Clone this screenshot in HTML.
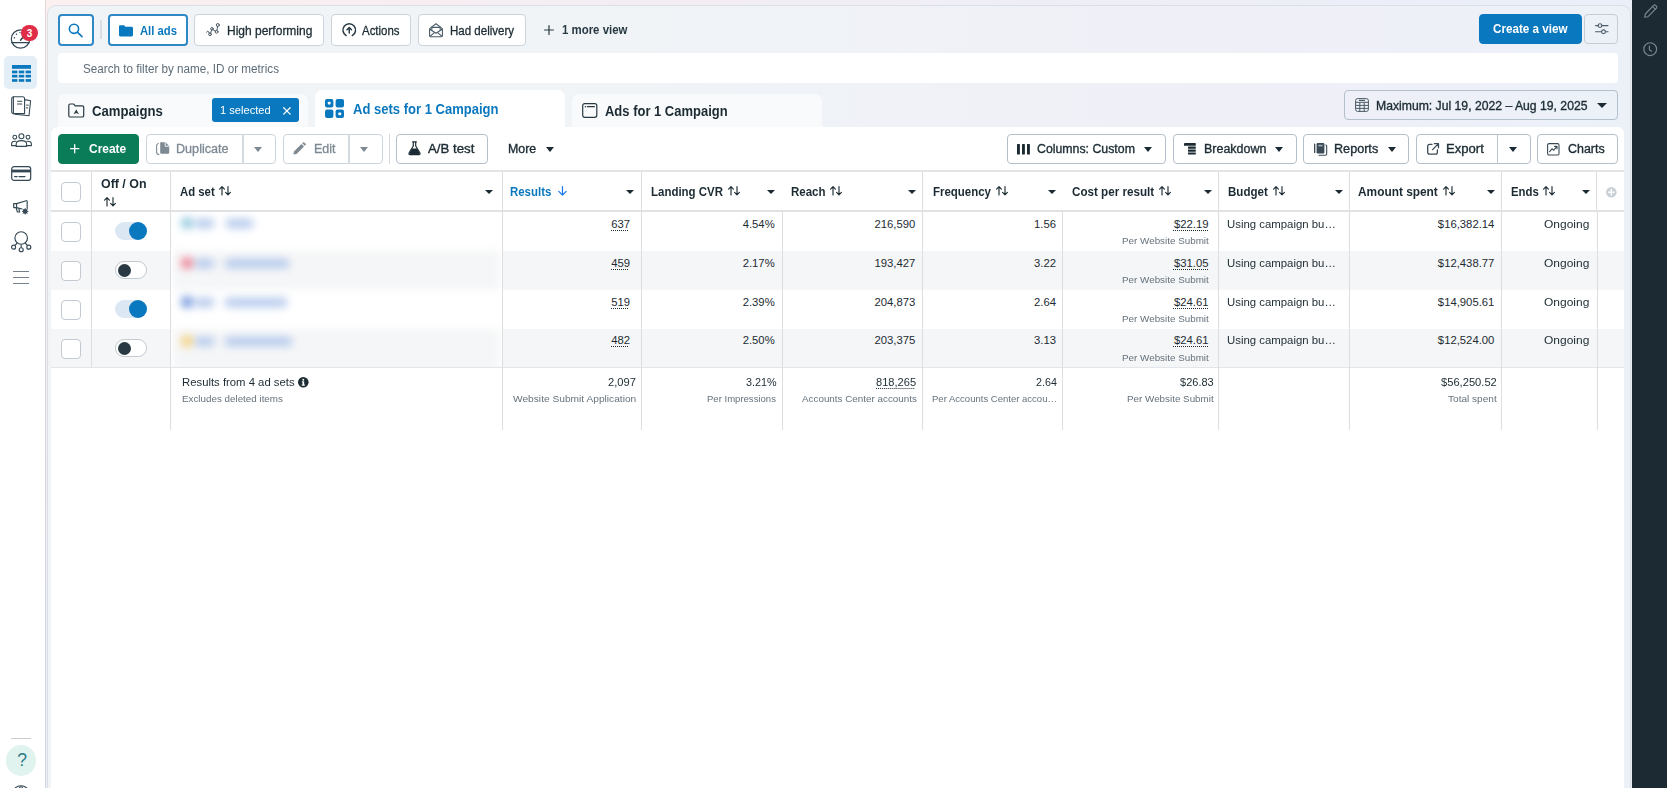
<!DOCTYPE html>
<html lang="en">
<head>
<meta charset="utf-8">
<title>Ads Manager</title>
<style>
*{box-sizing:border-box;margin:0;padding:0}
html,body{width:1667px;height:788px;overflow:hidden}
body{position:relative;font-family:"Liberation Sans",sans-serif;color:#1c2b33;font-size:12px;
 background:linear-gradient(to bottom right,#fcf1ef 0%,#f6eef2 14%,#f0eef6 28%,#e9eff8 50%,#e6f0fa 100%)}
.abs{position:absolute}
#left{position:absolute;left:0;top:0;width:45px;height:788px;background:#fff}
#leftb{position:absolute;left:45px;top:0;width:1px;height:788px;background:rgba(60,40,60,.13)}
#right{position:absolute;left:1632px;top:0;width:35px;height:788px;background:#1c2b33}
#panel{position:absolute;left:47px;top:5px;width:1584px;height:800px;border:1px solid #dcdfe4;border-radius:9px 9px 0 0;
 background:linear-gradient(90deg,#f0f4f7 0%,#f0f4f7 35%,#efeff7 78%,#ecf1f8 100%)}
#white{position:absolute;left:51px;top:127px;width:1573px;height:700px;background:#fff;border-radius:7px 7px 0 0}
.btn{position:absolute;border:1px solid #ccd3da;border-radius:4px;background:#fff}
.t{position:absolute;white-space:nowrap;line-height:1}
svg{position:absolute;overflow:visible}
.vl{position:absolute;width:1px;background:#dcdee1}
.hl{position:absolute;height:1px;background:#dcdee1}
.cb{position:absolute;width:20px;height:20px;border:1px solid #c3cad2;border-radius:4px;background:#fff}
.tg{position:absolute;width:32px;height:18px;border-radius:9px}
.tg i{position:absolute;top:0;width:18px;height:18px;border-radius:9px}
.tg.on{background:#dbe8f3}
.tg.on i{right:0;background:#0a78be}
.tg.off{background:#fff;border:1px solid #c3cad2}
.tg.off i{left:2px;top:1.5px;width:13px;height:13px;background:#283943}
.car{position:absolute;width:0;height:0;border-left:4px solid transparent;border-right:4px solid transparent;border-top:5px solid #1c2b33}
</style>
</head>
<body>
<div id="left"></div><div id="leftb"></div><div id="panel"></div><div id="white"></div><div id="right"></div>
<div class="btn" style="left:58px;top:14px;width:36px;height:32px;border:2px solid #2f89c7"></div>
<svg style="left:68px;top:23px" width="15" height="15" viewBox="0 0 15 15" fill="none" stroke="#0a78be" stroke-width="1.6" stroke-linecap="round"><circle cx="6" cy="5.8" r="4.6"/><path d="M9.6 9.4 L14 13.6"/></svg>
<div class="abs" style="left:100px;top:20px;width:2px;height:19px;background:#dadee6"></div>
<div class="btn" style="left:108px;top:14px;width:80px;height:32px;border:2px solid #2f89c7"></div>
<svg style="left:119px;top:24.5px" width="14" height="11.5" viewBox="0 0 14 11.5"><path d="M0 1.6 Q0 0.3 1.3 0.3 H4.6 Q5.4 0.3 5.8 0.9 L6.4 1.8 H12.6 Q14 1.8 14 3.2 V10 Q14 11.4 12.6 11.4 H1.4 Q0 11.4 0 10 Z" fill="#0a78be"/></svg>
<div class="btn" style="left:194px;top:14px;width:130px;height:32px;"></div>
<svg style="left:206px;top:23px" width="14" height="13" viewBox="0 0 14 13" fill="none" stroke="#4a5a66" stroke-width="1" stroke-linecap="round" stroke-linejoin="round"><path d="M0.6 9.2 Q1.6 7.2 2.6 8.6 L3.3 10.2 M4.6 10.3 L5.6 6.9 M6.7 6.6 L9.6 8.3 M10.9 7.6 L11.6 3.3"/><circle cx="11.8" cy="2" r="1.5"/><circle cx="4" cy="11.3" r="1.4"/><circle cx="6" cy="5.8" r="1.3"/><circle cx="10.6" cy="8.8" r="1.4"/></svg>
<div class="btn" style="left:331px;top:14px;width:80px;height:32px;"></div>
<svg style="left:341.5px;top:22.5px" width="14.5" height="14" viewBox="0 0 14.5 14" fill="none" stroke="#283943" stroke-width="1.45" stroke-linecap="round" stroke-linejoin="round"><path d="M4.2 12.6 A6.3 6.3 0 1 1 10.3 12.6"/><path d="M7.25 10 V4.6 M5 6.7 L7.25 4.4 L9.5 6.7"/></svg>
<div class="btn" style="left:418px;top:14px;width:108px;height:32px;"></div>
<svg style="left:429px;top:22.5px" width="14" height="14.5" viewBox="0 0 14 14.5" fill="none" stroke="#4a5a66" stroke-width="1.1" stroke-linejoin="round"><path d="M0.6 5.6 L7 0.8 L13.4 5.6 V12.4 Q13.4 13.8 12 13.8 H2 Q0.6 13.8 0.6 12.4 Z"/><path d="M2.8 7.2 V4.4 H11.2 V7.2"/><path d="M0.9 6.2 L7 10.2 L13.1 6.2"/><path d="M1 13.3 L5.6 9.4 M13 13.3 L8.4 9.4"/></svg>
<svg style="left:544px;top:24.8px" width="10" height="10" viewBox="0 0 10 10" stroke="#283943" stroke-width="1.2" stroke-linecap="round"><path d="M5 0.6 V9.4 M0.6 5 H9.4"/></svg>
<div class="btn" style="left:1479px;top:14px;width:102.5px;height:30px;background:#0a78be;border-color:#0a78be"></div>
<div class="btn" style="left:1584px;top:14px;width:34px;height:30px;background:transparent;border-color:#c5ccd4"></div>
<svg style="left:1594.5px;top:23px" width="13.5" height="11.5" viewBox="0 0 13.5 11.5" fill="none" stroke="#4a5a66" stroke-width="1.1" stroke-linecap="round"><path d="M0.6 2.6 H3 M7 2.6 H13 M0.6 8.8 H6.4 M10.6 8.8 H13"/><circle cx="5" cy="2.6" r="1.9"/><circle cx="8.5" cy="8.8" r="1.9"/></svg>
<div class="abs" style="left:58px;top:53px;width:1560px;height:30px;background:#fff;border-radius:4px"></div>
<div class="abs" style="left:58px;top:93.5px;width:250px;height:34px;background:#f8fafb;border-radius:7px 7px 0 0"></div>
<div class="abs" style="left:315px;top:89.5px;width:250px;height:40px;background:#fff;border-radius:7px 7px 0 0"></div>
<div class="abs" style="left:572px;top:93.5px;width:250px;height:34px;background:#f8fafb;border-radius:7px 7px 0 0"></div>
<div class="abs" style="left:51px;top:127px;width:1573px;height:10px;background:#fff;border-radius:7px 7px 0 0"></div>
<svg style="left:68px;top:103px" width="16.5" height="15" viewBox="0 0 16.5 15" fill="none" stroke="#283943" stroke-width="1.2" stroke-linejoin="round"><path d="M0.8 2.4 Q0.8 1 2.2 1 H5.2 Q6 1 6.4 1.7 L7 2.8 H14.2 Q15.7 2.8 15.7 4.2 V12.4 Q15.7 14 14.2 14 H2.3 Q0.8 14 0.8 12.4 Z"/><path d="M5.5 11.2 L8.25 6.4 L11 11.2 L8.25 9.9 Z" fill="#283943" stroke="none"/></svg>
<div class="abs" style="left:212px;top:98px;width:86.5px;height:24px;background:#0a78be;border-radius:3px"></div>
<svg style="left:283px;top:106.6px" width="7.8" height="7.8" viewBox="0 0 8 8" stroke="#fff" stroke-width="1.3" stroke-linecap="round"><path d="M0.7 0.7 L7.3 7.3 M7.3 0.7 L0.7 7.3"/></svg>
<svg style="left:325px;top:99px" width="19" height="19" viewBox="0 0 19 19"><g fill="#0a78be"><rect x="0" y="0" width="8.4" height="8.4" rx="2"/><rect x="10.6" y="0" width="8.4" height="8.4" rx="2"/><rect x="0" y="10.6" width="8.4" height="8.4" rx="2"/><rect x="10.6" y="10.6" width="8.4" height="8.4" rx="2"/></g><g fill="#fff"><rect x="2.8" y="2.8" width="2.8" height="2.8" rx="0.8"/><rect x="13.4" y="13.4" width="2.8" height="2.8" rx="0.8"/></g></svg>
<svg style="left:582px;top:103px" width="15.5" height="15" viewBox="0 0 15.5 15" fill="none" stroke="#283943" stroke-width="1.2"><rect x="0.7" y="0.7" width="14.1" height="13.6" rx="2"/><path d="M5.4 3.7 H12.4" stroke-linecap="round"/><circle cx="3.4" cy="3.7" r="0.8" fill="#283943" stroke="none"/></svg>
<div class="btn" style="left:1344px;top:89.5px;width:274px;height:30.5px;background:transparent;border-color:#b3bfcb"></div>
<svg style="left:1355px;top:98px" width="14" height="14" viewBox="0 0 14 14" fill="none" stroke="#4a5a66" stroke-width="1"><rect x="0.6" y="0.6" width="12.8" height="12.8" rx="2"/><path d="M0.6 4.3 H13.4 M0.6 7.4 H13.4 M0.6 10.4 H13.4 M4.8 4.3 V13.4 M9.2 4.3 V13.4"/><path d="M4 2.4 H10" stroke-width="1.2"/></svg>
<div class="car" style="left:1596.5px;top:102.7px;border-left-width:5px;border-right-width:5px;border-top-width:5.5px"></div>
<div class="btn" style="left:58px;top:134px;width:81px;height:30px;background:#0b7c58;border-color:#0b7c58"></div>
<svg style="left:70px;top:144.4px" width="9.4" height="9.4" viewBox="0 0 9.4 9.4" stroke="#fff" stroke-width="1.3" stroke-linecap="round"><path d="M4.7 0.6 V8.8 M0.6 4.7 H8.8"/></svg>
<div class="btn" style="left:146px;top:134px;width:130px;height:30px;border-color:#ccd4dc"></div>
<div class="vl" style="left:241.5px;top:134px;height:30px;width:2px;background:#d3dae2"></div>
<svg style="left:156px;top:142px" width="13.5" height="13" viewBox="0 0 13.5 13"><path d="M4.2 0.3 H9.4 L13.2 4 V10.6 Q13.2 11.8 12 11.8 H5.4 Q4.2 11.8 4.2 10.6 Z" fill="#7d8993"/><path d="M9.2 0.5 V4.2 H13" stroke="#fff" stroke-width="0.9" fill="none"/><path d="M2.2 1.4 Q0.6 2.2 0.6 4 V9.8 Q0.6 12.2 2.8 12.6" fill="none" stroke="#7d8993" stroke-width="1.1" stroke-linecap="round"/></svg>
<div class="car" style="left:254px;top:147.2px;border-left-width:4.6px;border-right-width:4.6px;border-top-width:5.3px;border-top-color:#7d8993"></div>
<div class="btn" style="left:283px;top:134px;width:100px;height:30px;border-color:#ccd4dc"></div>
<div class="vl" style="left:348px;top:134px;height:30px;width:2px;background:#d3dae2"></div>
<svg style="left:293px;top:142px" width="13" height="13" viewBox="0 0 13 13" fill="#7d8993"><path d="M0.4 12.6 L1 9.4 L8.4 2 L11 4.6 L3.6 12 Z"/><path d="M9.2 1.2 L10 0.4 Q10.6 -0.1 11.2 0.4 L12.6 1.8 Q13.1 2.4 12.6 3 L11.8 3.8 Z"/></svg>
<div class="car" style="left:360.3px;top:147.2px;border-left-width:4.6px;border-right-width:4.6px;border-top-width:5.3px;border-top-color:#7d8993"></div>
<div class="vl" style="left:389px;top:134px;height:30px;background:#d3d9de"></div>
<div class="btn" style="left:396px;top:134px;width:92px;height:30px;border-color:#b3bfcb"></div>
<svg style="left:407.5px;top:141.2px" width="13" height="14.4" viewBox="0 0 13 14.4"><path d="M4.6 0.8 H8.4 M5.3 0.8 V5 L1.2 11.8 Q0.4 13.6 2.2 13.7 H10.8 Q12.6 13.6 11.8 11.8 L7.7 5 V0.8" fill="none" stroke="#1c2b33" stroke-width="1.2" stroke-linecap="round" stroke-linejoin="round"/><path d="M3.9 7.6 H9.1 L11.4 11.7 Q11.9 13 10.7 13.1 H2.3 Q1.1 13 1.6 11.7 Z" fill="#1c2b33"/></svg>
<div class="car" style="left:545.6px;top:147.2px;border-left-width:4.6px;border-right-width:4.6px;border-top-width:5.3px"></div>
<div class="btn" style="left:1007px;top:134px;width:159px;height:30px;border-color:#b3bfcb"></div>
<svg style="left:1017px;top:143.6px" width="13" height="10.6" viewBox="0 0 13 10.6" fill="#1c2b33"><rect x="0" y="0" width="2.9" height="10.6" rx="0.6"/><rect x="5" y="0" width="2.9" height="10.6" rx="0.6"/><rect x="10" y="0" width="2.9" height="10.6" rx="0.6"/></svg>
<div class="car" style="left:1144.4px;top:147.2px;border-left-width:4.6px;border-right-width:4.6px;border-top-width:5.3px"></div>
<div class="btn" style="left:1173px;top:134px;width:124px;height:30px;border-color:#b3bfcb"></div>
<svg style="left:1183.5px;top:143px" width="11.8" height="11.6" viewBox="0 0 11.8 11.6" fill="#1c2b33"><rect x="0" y="0" width="11.8" height="2.7" rx="0.5"/><rect x="4" y="3.6" width="7.8" height="2.2" rx="0.4"/><rect x="4" y="6.5" width="7.8" height="2.2" rx="0.4"/><rect x="4" y="9.4" width="7.8" height="2.2" rx="0.4"/></svg>
<div class="car" style="left:1274.9px;top:147.2px;border-left-width:4.6px;border-right-width:4.6px;border-top-width:5.3px"></div>
<div class="btn" style="left:1303px;top:134px;width:106px;height:30px;border-color:#b3bfcb"></div>
<svg style="left:1313.5px;top:142.8px" width="13.2" height="12.6" viewBox="0 0 13.2 12.6"><rect x="0" y="0.4" width="1.3" height="9.6" rx="0.5" fill="#3a4b57"/><rect x="2.6" y="0" width="7.8" height="10.4" rx="1.2" fill="#3a4b57"/><rect x="4.4" y="1.8" width="4.2" height="1.6" fill="#fff" opacity=".55"/><path d="M11.8 2 Q12.7 2 12.7 3 V10.8 Q12.7 12.2 11.3 12.2 H5" fill="none" stroke="#3a4b57" stroke-width="1.1" stroke-linecap="round"/></svg>
<div class="car" style="left:1387.6px;top:147.2px;border-left-width:4.6px;border-right-width:4.6px;border-top-width:5.3px"></div>
<div class="btn" style="left:1416px;top:134px;width:115px;height:30px;border-color:#b3bfcb"></div>
<div class="vl" style="left:1497px;top:134px;height:30px;background:#bcc5cd"></div>
<svg style="left:1427px;top:142.8px" width="12.2" height="11.8" viewBox="0 0 12.2 11.8" fill="none" stroke="#3a4b57" stroke-width="1.3" stroke-linecap="round" stroke-linejoin="round"><path d="M5 1.4 H2.6 Q0.7 1.4 0.7 3.3 V9.2 Q0.7 11.1 2.6 11.1 H8.5 Q10.4 11.1 10.4 9.2 V7"/><path d="M7.4 0.7 H11.5 V4.8 M11.3 0.9 L5.6 6.6"/></svg>
<div class="car" style="left:1509px;top:147.2px;border-left-width:4.6px;border-right-width:4.6px;border-top-width:5.3px"></div>
<div class="btn" style="left:1537px;top:134px;width:81px;height:30px;border-color:#b3bfcb"></div>
<svg style="left:1547.2px;top:142.8px" width="12.6" height="12.6" viewBox="0 0 12.6 12.6" fill="none" stroke="#3a4b57" stroke-width="1.1" stroke-linecap="round" stroke-linejoin="round"><rect x="0.6" y="0.6" width="11.4" height="11.4" rx="1.4"/><path d="M2.6 8.6 L5 5.8 L6.8 7.2 L9.8 3.6 M7.6 3.4 H10 V5.8"/></svg>
<div class="hl" style="left:51px;top:170px;height:2px;width:1573px;background:#e3e4e6"></div>
<div class="hl" style="left:51px;top:210px;height:2px;width:1573px;background:#e1e2e4"></div>
<div class="abs" style="left:51px;top:251px;width:1573px;height:39px;background:#f5f6f7"></div>
<div class="abs" style="left:51px;top:329px;width:1573px;height:39px;background:#f5f6f7"></div>
<div class="hl" style="left:51px;top:367px;width:1573px;background:#e3e6e9"></div>
<div class="abs" style="left:171px;top:212px;width:331px;height:155px;overflow:hidden;background:#fff"><div class="abs" style="left:0;top:0;width:331px;height:155px;filter:blur(4.2px)"><div class="abs" style="left:2px;top:39px;width:327px;height:39px;background:#f5f6f7"></div><div class="abs" style="left:2px;top:117px;width:327px;height:45px;background:#f5f6f7"></div><div class="abs" style="left:10px;top:5.4px;width:12px;height:12px;border-radius:6px;background:#8fc8dd"></div><div class="abs" style="left:24px;top:6.9px;width:19px;height:9px;border-radius:3px;background:#b4c9ec"></div><div class="abs" style="left:54.7px;top:6.9px;width:27.299999999999997px;height:9px;border-radius:3px;background:#b4c9ec"></div><div class="abs" style="left:10px;top:45.2px;width:12px;height:12px;border-radius:6px;background:#ee7f92"></div><div class="abs" style="left:24px;top:46.7px;width:19px;height:9px;border-radius:3px;background:#b4c9ec"></div><div class="abs" style="left:53.7px;top:46.7px;width:63.89999999999999px;height:9px;border-radius:3px;background:#b4c9ec"></div><div class="abs" style="left:10px;top:84px;width:12px;height:12px;border-radius:6px;background:#7396de"></div><div class="abs" style="left:24px;top:85.5px;width:19px;height:9px;border-radius:3px;background:#b4c9ec"></div><div class="abs" style="left:54px;top:85.5px;width:62px;height:9px;border-radius:3px;background:#b4c9ec"></div><div class="abs" style="left:10px;top:123px;width:12px;height:12px;border-radius:6px;background:#f4d27c"></div><div class="abs" style="left:24px;top:124.5px;width:19px;height:9px;border-radius:3px;background:#b4c9ec"></div><div class="abs" style="left:53.8px;top:124.5px;width:67.4px;height:9px;border-radius:3px;background:#b4c9ec"></div></div></div>
<div class="vl" style="left:91px;top:172px;height:39px"></div>
<div class="vl" style="left:170px;top:172px;height:39px"></div>
<div class="vl" style="left:502px;top:172px;height:39px"></div>
<div class="vl" style="left:641px;top:172px;height:39px"></div>
<div class="vl" style="left:922px;top:172px;height:39px"></div>
<div class="vl" style="left:1218px;top:172px;height:39px"></div>
<div class="vl" style="left:1349px;top:172px;height:39px"></div>
<div class="vl" style="left:1501px;top:172px;height:39px"></div>
<div class="vl" style="left:1596px;top:172px;height:39px"></div>
<div class="vl" style="left:91px;top:212px;height:155px"></div>
<div class="vl" style="left:170px;top:212px;height:218px"></div>
<div class="vl" style="left:502px;top:212px;height:218px"></div>
<div class="vl" style="left:641px;top:212px;height:218px"></div>
<div class="vl" style="left:782px;top:212px;height:218px"></div>
<div class="vl" style="left:922px;top:212px;height:218px"></div>
<div class="vl" style="left:1062px;top:212px;height:218px"></div>
<div class="vl" style="left:1218px;top:212px;height:218px"></div>
<div class="vl" style="left:1349px;top:212px;height:218px"></div>
<div class="vl" style="left:1501px;top:212px;height:218px"></div>
<div class="vl" style="left:1597px;top:212px;height:218px"></div>
<div class="cb" style="left:61px;top:182px"></div>
<div class="cb" style="left:61px;top:221.5px"></div>
<div class="tg on" style="left:115px;top:222px"><i></i></div>
<div class="cb" style="left:61px;top:260.5px"></div>
<div class="tg off" style="left:115px;top:261px"><i></i></div>
<div class="cb" style="left:61px;top:299.5px"></div>
<div class="tg on" style="left:115px;top:300px"><i></i></div>
<div class="cb" style="left:61px;top:338.5px"></div>
<div class="tg off" style="left:115px;top:339px"><i></i></div>
<svg style="left:104.3px;top:196.6px" width="12" height="9.4" viewBox="0 0 12 9.4" fill="none" stroke="#1c2b33" stroke-width="1.15" stroke-linecap="round" stroke-linejoin="round"><path d="M3 9 V0.8 M0.6 3.2 L3 0.7 L5.4 3.2 M9 0.6 V8.8 M6.6 6.4 L9 8.9 L11.4 6.4"/></svg>
<svg style="left:219.4px;top:186.4px" width="12" height="9.4" viewBox="0 0 12 9.4" fill="none" stroke="#1c2b33" stroke-width="1.15" stroke-linecap="round" stroke-linejoin="round"><path d="M3 9 V0.8 M0.6 3.2 L3 0.7 L5.4 3.2 M9 0.6 V8.8 M6.6 6.4 L9 8.9 L11.4 6.4"/></svg>
<div class="car" style="left:485.3px;top:190.2px;border-left-width:4px;border-right-width:4px;border-top-width:4.7px"></div>
<svg style="left:557.8px;top:186px" width="9" height="9.8" viewBox="0 0 9 9.8" fill="none" stroke="#1877f2" stroke-width="1.25" stroke-linecap="round" stroke-linejoin="round"><path d="M4.5 0.7 V9 M0.8 5.4 L4.5 9.1 L8.2 5.4"/></svg>
<div class="car" style="left:626.4px;top:190.2px;border-left-width:4px;border-right-width:4px;border-top-width:4.7px"></div>
<svg style="left:727.6px;top:186.4px" width="12" height="9.4" viewBox="0 0 12 9.4" fill="none" stroke="#1c2b33" stroke-width="1.15" stroke-linecap="round" stroke-linejoin="round"><path d="M3 9 V0.8 M0.6 3.2 L3 0.7 L5.4 3.2 M9 0.6 V8.8 M6.6 6.4 L9 8.9 L11.4 6.4"/></svg>
<div class="car" style="left:767.2px;top:190.2px;border-left-width:4px;border-right-width:4px;border-top-width:4.7px"></div>
<svg style="left:830px;top:186.4px" width="12" height="9.4" viewBox="0 0 12 9.4" fill="none" stroke="#1c2b33" stroke-width="1.15" stroke-linecap="round" stroke-linejoin="round"><path d="M3 9 V0.8 M0.6 3.2 L3 0.7 L5.4 3.2 M9 0.6 V8.8 M6.6 6.4 L9 8.9 L11.4 6.4"/></svg>
<div class="car" style="left:907.5px;top:190.2px;border-left-width:4px;border-right-width:4px;border-top-width:4.7px"></div>
<svg style="left:995.6px;top:186.4px" width="12" height="9.4" viewBox="0 0 12 9.4" fill="none" stroke="#1c2b33" stroke-width="1.15" stroke-linecap="round" stroke-linejoin="round"><path d="M3 9 V0.8 M0.6 3.2 L3 0.7 L5.4 3.2 M9 0.6 V8.8 M6.6 6.4 L9 8.9 L11.4 6.4"/></svg>
<div class="car" style="left:1048.3999999999999px;top:190.2px;border-left-width:4px;border-right-width:4px;border-top-width:4.7px"></div>
<svg style="left:1159px;top:186.4px" width="12" height="9.4" viewBox="0 0 12 9.4" fill="none" stroke="#1c2b33" stroke-width="1.15" stroke-linecap="round" stroke-linejoin="round"><path d="M3 9 V0.8 M0.6 3.2 L3 0.7 L5.4 3.2 M9 0.6 V8.8 M6.6 6.4 L9 8.9 L11.4 6.4"/></svg>
<div class="car" style="left:1203.6px;top:190.2px;border-left-width:4px;border-right-width:4px;border-top-width:4.7px"></div>
<svg style="left:1272.8px;top:186.4px" width="12" height="9.4" viewBox="0 0 12 9.4" fill="none" stroke="#1c2b33" stroke-width="1.15" stroke-linecap="round" stroke-linejoin="round"><path d="M3 9 V0.8 M0.6 3.2 L3 0.7 L5.4 3.2 M9 0.6 V8.8 M6.6 6.4 L9 8.9 L11.4 6.4"/></svg>
<div class="car" style="left:1335.0px;top:190.2px;border-left-width:4px;border-right-width:4px;border-top-width:4.7px"></div>
<svg style="left:1442.6px;top:186.4px" width="12" height="9.4" viewBox="0 0 12 9.4" fill="none" stroke="#1c2b33" stroke-width="1.15" stroke-linecap="round" stroke-linejoin="round"><path d="M3 9 V0.8 M0.6 3.2 L3 0.7 L5.4 3.2 M9 0.6 V8.8 M6.6 6.4 L9 8.9 L11.4 6.4"/></svg>
<div class="car" style="left:1487.1999999999998px;top:190.2px;border-left-width:4px;border-right-width:4px;border-top-width:4.7px"></div>
<svg style="left:1543px;top:186.4px" width="12" height="9.4" viewBox="0 0 12 9.4" fill="none" stroke="#1c2b33" stroke-width="1.15" stroke-linecap="round" stroke-linejoin="round"><path d="M3 9 V0.8 M0.6 3.2 L3 0.7 L5.4 3.2 M9 0.6 V8.8 M6.6 6.4 L9 8.9 L11.4 6.4"/></svg>
<div class="car" style="left:1582.1999999999998px;top:190.2px;border-left-width:4px;border-right-width:4px;border-top-width:4.7px"></div>
<svg style="left:1606px;top:186.6px" width="10.6" height="10.6" viewBox="0 0 10.6 10.6"><circle cx="5.3" cy="5.3" r="5.3" fill="#c9d0d6"/><path d="M5.3 2.6 V8 M2.6 5.3 H8" stroke="#fff" stroke-width="1.5" stroke-linecap="round"/></svg>
<svg style="left:298.2px;top:376.7px" width="10.6" height="10.6" viewBox="0 0 10.6 10.6"><circle cx="5.3" cy="5.3" r="5.3" fill="#1c2b33"/><rect x="4.5" y="4.4" width="1.7" height="4" fill="#fff"/><rect x="3.8" y="4.4" width="1.6" height="1" fill="#fff"/><rect x="3.6" y="7.6" width="3.5" height="1" fill="#fff"/><circle cx="5.3" cy="2.7" r="1" fill="#fff"/></svg>
<svg style="left:10px;top:28px" width="22" height="22" viewBox="0 0 22 22" fill="none" stroke="#344854" stroke-width="1.2" stroke-linecap="round"><circle cx="10.5" cy="11" r="9.2"/><path d="M1.8 14.6 H19.2"/><path d="M10.5 12.2 L14.6 7.2" stroke-width="1.5"/><path d="M4.4 9.8 L4.5 9.8 M6.4 6.2 L6.5 6.2 M10 4.6 L10.1 4.6" stroke-width="1.4"/></svg>
<div class="abs" style="left:21.4px;top:25.3px;width:16.2px;height:16.2px;border-radius:9px;background:#e02c47"></div>
<div class="abs" style="left:4px;top:56px;width:33px;height:33px;border-radius:5px;background:#e3eef7"></div>
<svg style="left:11.7px;top:64.8px" width="19" height="17" viewBox="0 0 19 17" fill="#0a78be"><rect x="0" y="0" width="19" height="3.8"/><rect x="0" y="5.6" width="5.4" height="2.7"/><rect x="6.8" y="5.6" width="5.4" height="2.7"/><rect x="13.6" y="5.6" width="5.4" height="2.7"/><rect x="0" y="9.8" width="5.4" height="2.7"/><rect x="6.8" y="9.8" width="5.4" height="2.7"/><rect x="13.6" y="9.8" width="5.4" height="2.7"/><rect x="0" y="14.1" width="5.4" height="2.7"/><rect x="6.8" y="14.1" width="5.4" height="2.7"/><rect x="13.6" y="14.1" width="5.4" height="2.7"/></svg>
<svg style="left:11px;top:96px" width="20.5" height="21" viewBox="0 0 20.5 21" fill="none" stroke="#344854" stroke-width="1.1" stroke-linejoin="round" stroke-linecap="round"><path d="M13.6 3.6 L19.6 4.8 L18 19.8 L4 18.2"/><path d="M2.4 0.8 H11.6 Q13.6 0.8 13.6 2.8 V17.6 H2.4"/><path d="M2.4 0.8 Q0.7 0.9 0.7 2.6 V16 Q0.7 17.6 2.4 17.6 M2.4 0.8 V17.6"/><path d="M6.6 5.2 H10.8 M6.6 8 H10.8 M15.6 9 L17.2 9.3 M15.4 11.8 L16.8 12"/></svg>
<svg style="left:11px;top:133px" width="21" height="14" viewBox="0 0 21 14" fill="none" stroke="#344854" stroke-width="1.1" stroke-linecap="round" stroke-linejoin="round"><circle cx="10.4" cy="3.2" r="2.5"/><circle cx="3.8" cy="4.2" r="1.9"/><circle cx="17" cy="4.2" r="1.9"/><path d="M5.2 13.4 V11 Q5.2 7.6 10.4 7.6 Q15.6 7.6 15.6 11 V13.4 Z"/><path d="M5 8.2 Q0.6 8 0.6 11 V12.6 H5"/><path d="M15.8 8.2 Q20.4 8 20.4 11 V12.6 H15.8"/></svg>
<svg style="left:11px;top:166px" width="20.4" height="15" viewBox="0 0 20.4 15" fill="none" stroke="#344854" stroke-width="1.2"><rect x="0.7" y="0.7" width="19" height="13.6" rx="2.4"/><rect x="0.7" y="3.6" width="19" height="2.8" fill="#344854" stroke="none"/><path d="M3.6 10.6 H6.2 M8 10.6 H14" stroke-linecap="round"/></svg>
<svg style="left:12.6px;top:200px" width="16.4" height="15" viewBox="0 0 16.4 15" fill="none" stroke="#344854" stroke-width="1.15" stroke-linejoin="round" stroke-linecap="round"><path d="M0.7 3.6 H3.6 L13.2 0.7 Q14.2 0.5 14.2 1.6 V8.4 M0.7 3.6 V7.6 H3.6 L9 9 M3.6 3.6 V7.6 M3.2 7.8 L4.4 12 H6.6 L5.8 8.4"/><circle cx="12.2" cy="11.4" r="1.8" fill="#344854"/><path d="M12.2 8.6 V14.2 M9.4 11.4 H15 M10.2 9.4 L14.2 13.4 M14.2 9.4 L10.2 13.4" stroke-width="0.9"/></svg>
<svg style="left:11px;top:230.6px" width="20.4" height="22" viewBox="0 0 20.4 22" fill="none" stroke="#344854" stroke-width="1.15"><circle cx="10.2" cy="7" r="6.3"/><circle cx="2.6" cy="16.2" r="2"/><circle cx="10.2" cy="18.8" r="2"/><circle cx="17.8" cy="16.2" r="2"/><path d="M10.2 13.4 V16.8 M6.2 12 L3.8 14.6 M14.2 12 L16.6 14.6"/></svg>
<div class="abs" style="left:13.3px;top:271px;width:15.4px;height:1.2px;background:#74818c"></div>
<div class="abs" style="left:13.3px;top:277.3px;width:15.4px;height:1.2px;background:#74818c"></div>
<div class="abs" style="left:13.3px;top:283.2px;width:15.4px;height:1.2px;background:#74818c"></div>
<div class="abs" style="left:11px;top:738px;width:20px;height:1px;background:#c9cdd2"></div>
<div class="abs" style="left:5.7px;top:745.4px;width:30.6px;height:30.6px;border-radius:16px;background:#e1f3ee"></div>
<svg style="left:14px;top:785px" width="14" height="6" viewBox="0 0 14 6" fill="none" stroke="#344854" stroke-width="1.1"><path d="M1 3 Q7 -1.5 13 3"/><circle cx="7" cy="3.4" r="1.6"/></svg>
<svg style="left:1643.5px;top:4px" width="13.6" height="14" viewBox="0 0 13.6 14" fill="none" stroke="#7a8995" stroke-width="1.1" stroke-linejoin="round" stroke-linecap="round"><path d="M0.7 13.3 L1.3 10 L9.6 1.4 Q10.6 0.4 11.6 1.4 L12.4 2.2 Q13.3 3.2 12.4 4.2 L4 12.7 Z"/><path d="M8.6 2.6 L11.2 5.2"/></svg>
<svg style="left:1643px;top:41.5px" width="14.4" height="14.4" viewBox="0 0 14.4 14.4" fill="none" stroke="#7a8995" stroke-width="1.15" stroke-linecap="round" stroke-linejoin="round"><circle cx="7.2" cy="7.2" r="6.4"/><path d="M6.4 4.2 V7.8 L8.6 9.2"/></svg>
<div class="t" style="left:139.90px;top:24.75px;transform:scaleX(0.9000);transform-origin:0 0;font-size:12.5px;font-weight:bold;color:#0a78be;letter-spacing:0.000px;">All ads</div>
<div class="t" style="left:226.60px;top:24.75px;transform:scaleX(0.9602);transform-origin:0 0;font-size:12.5px;font-weight:normal;color:#1c2b33;letter-spacing:0.000px;-webkit-text-stroke:0.3px #1c2b33;">High performing</div>
<div class="t" style="left:362.20px;top:24.75px;transform:scaleX(0.9146);transform-origin:0 0;font-size:12.5px;font-weight:normal;color:#1c2b33;letter-spacing:0.000px;-webkit-text-stroke:0.3px #1c2b33;">Actions</div>
<div class="t" style="left:450.20px;top:24.75px;transform:scaleX(0.9225);transform-origin:0 0;font-size:12.5px;font-weight:normal;color:#1c2b33;letter-spacing:0.000px;-webkit-text-stroke:0.3px #1c2b33;">Had delivery</div>
<div class="t" style="left:562.30px;top:23.55px;transform:scaleX(0.9137);transform-origin:0 0;font-size:12.5px;font-weight:bold;color:#283943;letter-spacing:0.000px;">1 more view</div>
<div class="t" style="left:1493.00px;top:22.30px;transform:scaleX(0.8964);transform-origin:0 0;font-size:13px;font-weight:bold;color:#fff;letter-spacing:0.000px;">Create a view</div>
<div class="t" style="left:83.00px;top:62.75px;transform:scaleX(0.9342);transform-origin:0 0;font-size:12.5px;font-weight:normal;color:#5d6c78;letter-spacing:0.000px;">Search to filter by name, ID or metrics</div>
<div class="t" style="left:91.80px;top:103.40px;transform:scaleX(0.8768);transform-origin:0 0;font-size:15px;font-weight:bold;color:#1c2b33;letter-spacing:0.000px;">Campaigns</div>
<div class="t" style="left:219.60px;top:104.80px;transform:scaleX(0.9427);transform-origin:0 0;font-size:11.8px;font-weight:normal;color:#fff;letter-spacing:0.000px;">1 selected</div>
<div class="t" style="left:352.50px;top:100.80px;transform:scaleX(0.8684);transform-origin:0 0;font-size:15px;font-weight:bold;color:#0a78be;letter-spacing:0.000px;">Ad sets for 1 Campaign</div>
<div class="t" style="left:605.30px;top:103.20px;transform:scaleX(0.8653);transform-origin:0 0;font-size:15px;font-weight:bold;color:#1c2b33;letter-spacing:0.000px;">Ads for 1 Campaign</div>
<div class="t" style="left:1375.70px;top:99.55px;transform:scaleX(0.9755);transform-origin:0 0;font-size:12.5px;font-weight:normal;color:#1c2b33;letter-spacing:0.000px;-webkit-text-stroke:0.35px #1c2b33;">Maximum: Jul 19, 2022 – Aug 19, 2025</div>
<div class="t" style="left:88.60px;top:142.75px;transform:scaleX(0.9558);transform-origin:0 0;font-size:12.5px;font-weight:bold;color:#fff;letter-spacing:0.000px;">Create</div>
<div class="t" style="left:176.40px;top:142.75px;transform:scaleX(1.0091);transform-origin:0 0;font-size:12.5px;font-weight:normal;color:#7d8993;letter-spacing:0.000px;-webkit-text-stroke:0.3px #7d8993;">Duplicate</div>
<div class="t" style="left:313.50px;top:142.75px;transform:scaleX(0.9978);transform-origin:0 0;font-size:12.5px;font-weight:normal;color:#7d8993;letter-spacing:0.000px;-webkit-text-stroke:0.3px #7d8993;">Edit</div>
<div class="t" style="left:427.80px;top:142.75px;transform:scaleX(1.0598);transform-origin:0 0;font-size:12.5px;font-weight:normal;color:#1c2b33;letter-spacing:0.000px;-webkit-text-stroke:0.35px #1c2b33;">A/B test</div>
<div class="t" style="left:508.40px;top:142.75px;transform:scaleX(0.9900);transform-origin:0 0;font-size:12.5px;font-weight:normal;color:#1c2b33;letter-spacing:0.000px;-webkit-text-stroke:0.35px #1c2b33;">More</div>
<div class="t" style="left:1037.40px;top:142.95px;transform:scaleX(0.9855);transform-origin:0 0;font-size:12.5px;font-weight:normal;color:#1c2b33;letter-spacing:0.000px;-webkit-text-stroke:0.35px #1c2b33;">Columns: Custom</div>
<div class="t" style="left:1203.50px;top:142.95px;transform:scaleX(0.9977);transform-origin:0 0;font-size:12.5px;font-weight:normal;color:#1c2b33;letter-spacing:0.000px;-webkit-text-stroke:0.35px #1c2b33;">Breakdown</div>
<div class="t" style="left:1334.00px;top:142.95px;transform:scaleX(1.0096);transform-origin:0 0;font-size:12.5px;font-weight:normal;color:#1c2b33;letter-spacing:0.000px;-webkit-text-stroke:0.35px #1c2b33;">Reports</div>
<div class="t" style="left:1446.40px;top:142.95px;transform:scaleX(1.0459);transform-origin:0 0;font-size:12.5px;font-weight:normal;color:#1c2b33;letter-spacing:0.000px;-webkit-text-stroke:0.35px #1c2b33;">Export</div>
<div class="t" style="left:1567.60px;top:142.95px;transform:scaleX(0.9965);transform-origin:0 0;font-size:12.5px;font-weight:normal;color:#1c2b33;letter-spacing:0.000px;-webkit-text-stroke:0.35px #1c2b33;">Charts</div>
<div class="t" style="left:100.70px;top:178.30px;transform:scaleX(1.0341);transform-origin:0 0;font-size:12px;font-weight:bold;color:#1c2b33;letter-spacing:0.000px;">Off / On</div>
<div class="t" style="left:179.90px;top:186.00px;transform:scaleX(0.9458);transform-origin:0 0;font-size:12px;font-weight:bold;color:#1c2b33;letter-spacing:0.000px;">Ad set</div>
<div class="t" style="left:510.30px;top:186.00px;transform:scaleX(0.9525);transform-origin:0 0;font-size:12px;font-weight:bold;color:#0a78be;letter-spacing:0.000px;">Results</div>
<div class="t" style="left:651.40px;top:186.00px;transform:scaleX(0.9558);transform-origin:0 0;font-size:12px;font-weight:bold;color:#1c2b33;letter-spacing:0.000px;">Landing CVR</div>
<div class="t" style="left:791.00px;top:186.00px;transform:scaleX(0.9575);transform-origin:0 0;font-size:12px;font-weight:bold;color:#1c2b33;letter-spacing:0.000px;">Reach</div>
<div class="t" style="left:932.60px;top:186.00px;transform:scaleX(0.9557);transform-origin:0 0;font-size:12px;font-weight:bold;color:#1c2b33;letter-spacing:0.000px;">Frequency</div>
<div class="t" style="left:1072.00px;top:186.00px;transform:scaleX(0.9706);transform-origin:0 0;font-size:12px;font-weight:bold;color:#1c2b33;letter-spacing:0.000px;">Cost per result</div>
<div class="t" style="left:1228.00px;top:186.00px;transform:scaleX(0.9630);transform-origin:0 0;font-size:12px;font-weight:bold;color:#1c2b33;letter-spacing:0.000px;">Budget</div>
<div class="t" style="left:1358.20px;top:186.00px;transform:scaleX(0.9892);transform-origin:0 0;font-size:12px;font-weight:bold;color:#1c2b33;letter-spacing:0.000px;">Amount spent</div>
<div class="t" style="left:1511.00px;top:186.00px;transform:scaleX(0.9474);transform-origin:0 0;font-size:12px;font-weight:bold;color:#1c2b33;letter-spacing:0.000px;">Ends</div>
<div class="t" style="left:611.14px;top:218.75px;font-size:11.3px;font-weight:normal;color:#1c2b33;letter-spacing:0.000px;text-decoration:underline dotted;text-decoration-thickness:1px;text-underline-offset:1.5px;">637</div>
<div class="t" style="left:742.65px;top:218.75px;font-size:11.3px;font-weight:normal;color:#1c2b33;letter-spacing:0.000px;">4.54%</div>
<div class="t" style="left:874.46px;top:218.75px;font-size:11.3px;font-weight:normal;color:#1c2b33;letter-spacing:0.000px;">216,590</div>
<div class="t" style="left:1034.00px;top:218.75px;font-size:11.3px;font-weight:normal;color:#1c2b33;letter-spacing:0.000px;">1.56</div>
<div class="t" style="left:1173.94px;top:218.75px;font-size:11.3px;font-weight:normal;color:#1c2b33;letter-spacing:0.000px;text-decoration:underline dotted;text-decoration-thickness:1px;text-underline-offset:1.5px;">$22.19</div>
<div class="t" style="left:1121.70px;top:235.80px;transform:scaleX(1.0046);transform-origin:0 0;font-size:9.8px;font-weight:normal;color:#65727d;letter-spacing:0.000px;">Per Website Submit</div>
<div class="t" style="left:1226.50px;top:218.75px;transform:scaleX(1.0073);transform-origin:0 0;font-size:11.3px;font-weight:normal;color:#1c2b33;letter-spacing:0.000px;">Using campaign bu…</div>
<div class="t" style="left:1437.85px;top:218.75px;font-size:11.3px;font-weight:normal;color:#1c2b33;letter-spacing:0.000px;">$16,382.14</div>
<div class="t" style="left:1543.90px;top:218.75px;transform:scaleX(1.0604);transform-origin:0 0;font-size:11.3px;font-weight:normal;color:#1c2b33;letter-spacing:0.000px;">Ongoing</div>
<div class="t" style="left:611.14px;top:257.65px;font-size:11.3px;font-weight:normal;color:#1c2b33;letter-spacing:0.000px;text-decoration:underline dotted;text-decoration-thickness:1px;text-underline-offset:1.5px;">459</div>
<div class="t" style="left:742.65px;top:257.65px;font-size:11.3px;font-weight:normal;color:#1c2b33;letter-spacing:0.000px;">2.17%</div>
<div class="t" style="left:874.46px;top:257.65px;font-size:11.3px;font-weight:normal;color:#1c2b33;letter-spacing:0.000px;">193,427</div>
<div class="t" style="left:1034.00px;top:257.65px;font-size:11.3px;font-weight:normal;color:#1c2b33;letter-spacing:0.000px;">3.22</div>
<div class="t" style="left:1173.94px;top:257.65px;font-size:11.3px;font-weight:normal;color:#1c2b33;letter-spacing:0.000px;text-decoration:underline dotted;text-decoration-thickness:1px;text-underline-offset:1.5px;">$31.05</div>
<div class="t" style="left:1121.70px;top:274.70px;transform:scaleX(1.0046);transform-origin:0 0;font-size:9.8px;font-weight:normal;color:#65727d;letter-spacing:0.000px;">Per Website Submit</div>
<div class="t" style="left:1226.50px;top:257.65px;transform:scaleX(1.0073);transform-origin:0 0;font-size:11.3px;font-weight:normal;color:#1c2b33;letter-spacing:0.000px;">Using campaign bu…</div>
<div class="t" style="left:1437.85px;top:257.65px;font-size:11.3px;font-weight:normal;color:#1c2b33;letter-spacing:0.000px;">$12,438.77</div>
<div class="t" style="left:1543.90px;top:257.65px;transform:scaleX(1.0604);transform-origin:0 0;font-size:11.3px;font-weight:normal;color:#1c2b33;letter-spacing:0.000px;">Ongoing</div>
<div class="t" style="left:611.14px;top:296.55px;font-size:11.3px;font-weight:normal;color:#1c2b33;letter-spacing:0.000px;text-decoration:underline dotted;text-decoration-thickness:1px;text-underline-offset:1.5px;">519</div>
<div class="t" style="left:742.65px;top:296.55px;font-size:11.3px;font-weight:normal;color:#1c2b33;letter-spacing:0.000px;">2.39%</div>
<div class="t" style="left:874.46px;top:296.55px;font-size:11.3px;font-weight:normal;color:#1c2b33;letter-spacing:0.000px;">204,873</div>
<div class="t" style="left:1034.00px;top:296.55px;font-size:11.3px;font-weight:normal;color:#1c2b33;letter-spacing:0.000px;">2.64</div>
<div class="t" style="left:1173.94px;top:296.55px;font-size:11.3px;font-weight:normal;color:#1c2b33;letter-spacing:0.000px;text-decoration:underline dotted;text-decoration-thickness:1px;text-underline-offset:1.5px;">$24.61</div>
<div class="t" style="left:1121.70px;top:313.60px;transform:scaleX(1.0046);transform-origin:0 0;font-size:9.8px;font-weight:normal;color:#65727d;letter-spacing:0.000px;">Per Website Submit</div>
<div class="t" style="left:1226.50px;top:296.55px;transform:scaleX(1.0073);transform-origin:0 0;font-size:11.3px;font-weight:normal;color:#1c2b33;letter-spacing:0.000px;">Using campaign bu…</div>
<div class="t" style="left:1437.85px;top:296.55px;font-size:11.3px;font-weight:normal;color:#1c2b33;letter-spacing:0.000px;">$14,905.61</div>
<div class="t" style="left:1543.90px;top:296.55px;transform:scaleX(1.0604);transform-origin:0 0;font-size:11.3px;font-weight:normal;color:#1c2b33;letter-spacing:0.000px;">Ongoing</div>
<div class="t" style="left:611.14px;top:335.45px;font-size:11.3px;font-weight:normal;color:#1c2b33;letter-spacing:0.000px;text-decoration:underline dotted;text-decoration-thickness:1px;text-underline-offset:1.5px;">482</div>
<div class="t" style="left:742.65px;top:335.45px;font-size:11.3px;font-weight:normal;color:#1c2b33;letter-spacing:0.000px;">2.50%</div>
<div class="t" style="left:874.46px;top:335.45px;font-size:11.3px;font-weight:normal;color:#1c2b33;letter-spacing:0.000px;">203,375</div>
<div class="t" style="left:1034.00px;top:335.45px;font-size:11.3px;font-weight:normal;color:#1c2b33;letter-spacing:0.000px;">3.13</div>
<div class="t" style="left:1173.94px;top:335.45px;font-size:11.3px;font-weight:normal;color:#1c2b33;letter-spacing:0.000px;text-decoration:underline dotted;text-decoration-thickness:1px;text-underline-offset:1.5px;">$24.61</div>
<div class="t" style="left:1121.70px;top:352.50px;transform:scaleX(1.0046);transform-origin:0 0;font-size:9.8px;font-weight:normal;color:#65727d;letter-spacing:0.000px;">Per Website Submit</div>
<div class="t" style="left:1226.50px;top:335.45px;transform:scaleX(1.0073);transform-origin:0 0;font-size:11.3px;font-weight:normal;color:#1c2b33;letter-spacing:0.000px;">Using campaign bu…</div>
<div class="t" style="left:1437.85px;top:335.45px;font-size:11.3px;font-weight:normal;color:#1c2b33;letter-spacing:0.000px;">$12,524.00</div>
<div class="t" style="left:1543.90px;top:335.45px;transform:scaleX(1.0604);transform-origin:0 0;font-size:11.3px;font-weight:normal;color:#1c2b33;letter-spacing:0.000px;">Ongoing</div>
<div class="t" style="left:182.00px;top:376.75px;transform:scaleX(1.0019);transform-origin:0 0;font-size:11.3px;font-weight:normal;color:#1c2b33;letter-spacing:0.000px;">Results from 4 ad sets</div>
<div class="t" style="left:182.00px;top:393.60px;transform:scaleX(1.0015);transform-origin:0 0;font-size:9.8px;font-weight:normal;color:#65727d;letter-spacing:0.000px;">Excludes deleted items</div>
<div class="t" style="left:608.00px;top:376.75px;transform:scaleX(0.9865);transform-origin:0 0;font-size:11.3px;font-weight:normal;color:#1c2b33;letter-spacing:0.000px;">2,097</div>
<div class="t" style="left:512.60px;top:393.60px;transform:scaleX(1.0401);transform-origin:0 0;font-size:9.8px;font-weight:normal;color:#65727d;letter-spacing:0.000px;">Website Submit Application</div>
<div class="t" style="left:745.60px;top:376.75px;transform:scaleX(0.9549);transform-origin:0 0;font-size:11.3px;font-weight:normal;color:#1c2b33;letter-spacing:0.000px;">3.21%</div>
<div class="t" style="left:707.30px;top:393.60px;transform:scaleX(0.9734);transform-origin:0 0;font-size:9.8px;font-weight:normal;color:#65727d;letter-spacing:0.000px;">Per Impressions</div>
<div class="t" style="left:876.40px;top:376.75px;transform:scaleX(0.9818);transform-origin:0 0;font-size:11.3px;font-weight:normal;color:#1c2b33;letter-spacing:0.000px;text-decoration:underline dotted;text-decoration-thickness:1px;text-underline-offset:1.5px;">818,265</div>
<div class="t" style="left:802.00px;top:393.60px;transform:scaleX(1.0047);transform-origin:0 0;font-size:9.8px;font-weight:normal;color:#65727d;letter-spacing:0.000px;">Accounts Center accounts</div>
<div class="t" style="left:1036.00px;top:376.75px;transform:scaleX(0.9500);transform-origin:0 0;font-size:11.3px;font-weight:normal;color:#1c2b33;letter-spacing:0.000px;">2.64</div>
<div class="t" style="left:932.20px;top:393.60px;transform:scaleX(0.9726);transform-origin:0 0;font-size:9.8px;font-weight:normal;color:#65727d;letter-spacing:0.000px;">Per Accounts Center accou…</div>
<div class="t" style="left:1179.60px;top:376.75px;transform:scaleX(0.9750);transform-origin:0 0;font-size:11.3px;font-weight:normal;color:#1c2b33;letter-spacing:0.000px;">$26.83</div>
<div class="t" style="left:1126.90px;top:393.60px;transform:scaleX(1.0034);transform-origin:0 0;font-size:9.8px;font-weight:normal;color:#65727d;letter-spacing:0.000px;">Per Website Submit</div>
<div class="t" style="left:1440.70px;top:376.75px;transform:scaleX(0.9868);transform-origin:0 0;font-size:11.3px;font-weight:normal;color:#1c2b33;letter-spacing:0.000px;">$56,250.52</div>
<div class="t" style="left:1447.80px;top:393.60px;transform:scaleX(1.0276);transform-origin:0 0;font-size:9.8px;font-weight:normal;color:#65727d;letter-spacing:0.000px;">Total spent</div>
<div class="t" style="left:26.70px;top:28.80px;font-size:10px;font-weight:bold;color:#fff;letter-spacing:0.000px;">3</div>
<div class="t" style="left:17.20px;top:751.85px;font-size:17.5px;font-weight:normal;color:#2b7a87;letter-spacing:0.000px;">?</div>
</body>
</html>
